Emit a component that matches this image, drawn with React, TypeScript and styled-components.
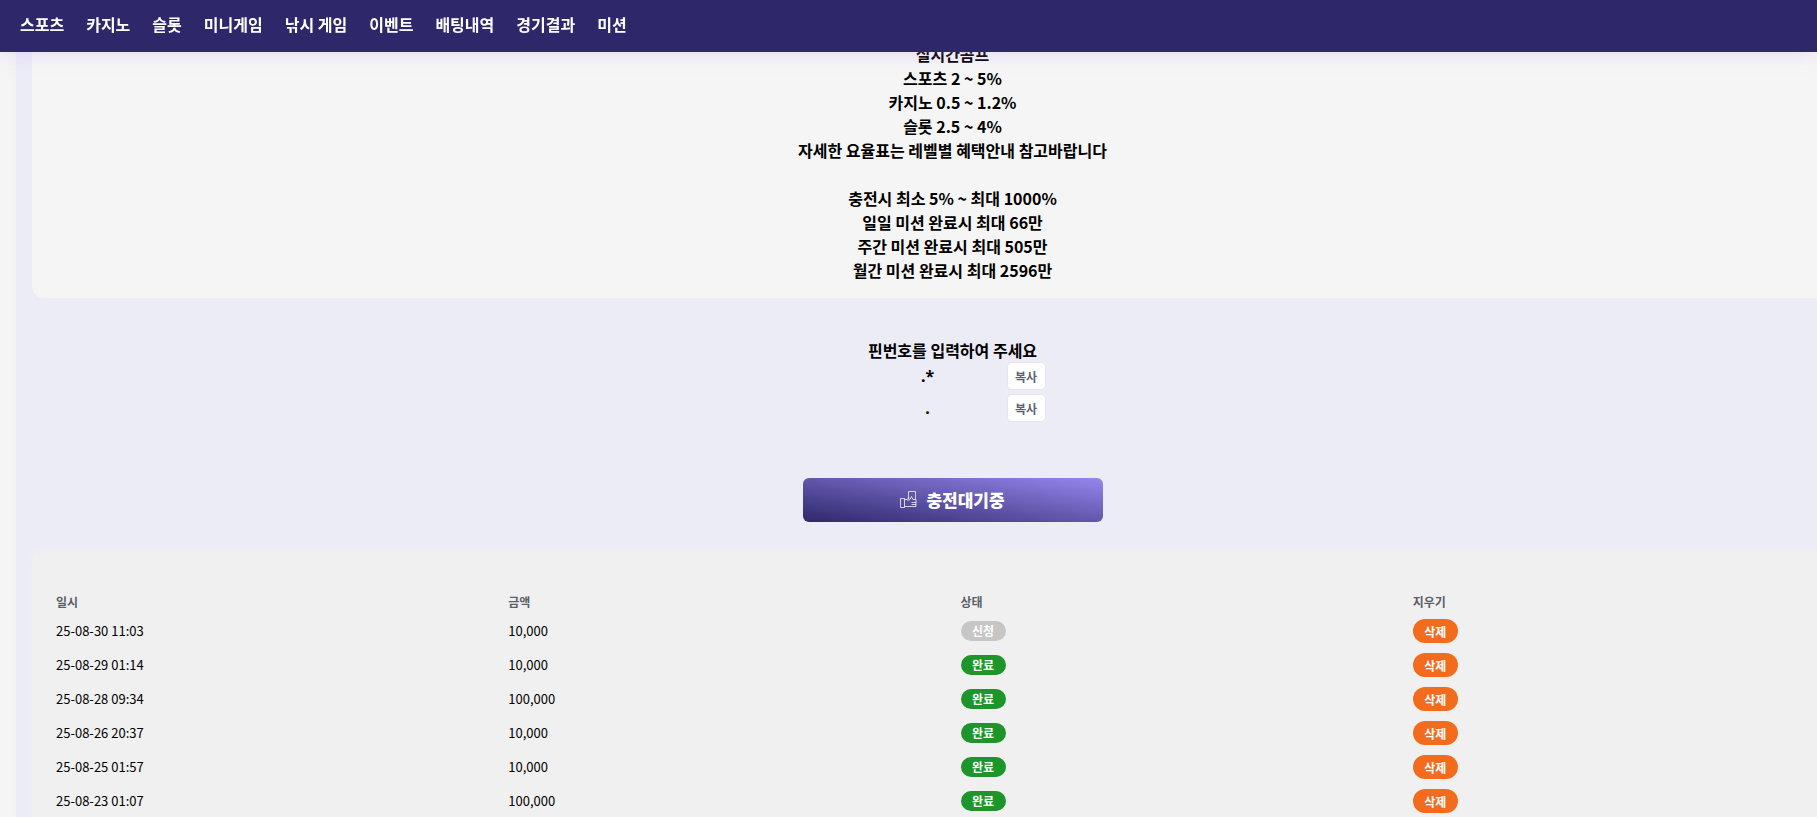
import React from "react";
import styled, { createGlobalStyle } from "styled-components";

const GlobalStyle = createGlobalStyle`
  *, *::before, *::after { box-sizing: border-box; }
  body {
    margin: 0;
    background: #f5f5f5;
    color: #000;
    font-family: "Noto Sans CJK KR", "Noto Sans", sans-serif;
    font-size: 16px;
    line-height: 24px;
  }
`;

const Page = styled.div`
  min-height: 100vh;
  overflow-x: hidden;
`;

const TopBar = styled.header`
  position: fixed;
  top: 0;
  left: 0;
  right: 0;
  z-index: 10;
  height: 52px;
  background: #2e286a;
  box-shadow: 0 0 20px rgba(200, 160, 255, 0.35);
`;

const Nav = styled.nav`
  display: flex;
  align-items: center;
  gap: 22px;
  height: 48px;
  padding: 0 20px;
`;

const NavLink = styled.a`
  color: #fff;
  font-size: 16px;
  font-weight: 700;
  text-decoration: none;
  white-space: nowrap;
`;

const Content = styled.main`
  width: calc(100% + 56px);
  margin-left: 16px;
  padding: 0 16px;
  background: #ececf6;
  box-shadow: 0 0 10px rgba(0, 0, 0, 0.03);
`;

const Notice = styled.section`
  padding: 42px 16px 16px;
  border-radius: 0 0 12px 12px;
  background: #f5f5f5;
  font-weight: 700;
  text-align: center;
`;

const NoticeLine = styled.p`
  min-height: 24px;
  margin: 0;
`;

const PinSection = styled.section`
  display: flex;
  flex-direction: column;
  align-items: center;
  padding: 40px 0 28px;
`;

const PinTitle = styled.h2`
  margin: 0;
  font-size: 16px;
  font-weight: 700;
`;

const PinRow = styled.div`
  display: grid;
  grid-template-columns: 158px 50px;
  align-items: center;
  height: 32px;
`;

const PinValue = styled.span`
  padding-bottom: 4px;
  font-family: "Noto Sans", sans-serif;
  font-weight: 700;
  text-align: center;
`;

const CopyButton = styled.button`
  width: 39px;
  height: 28px;
  margin-bottom: 4px;
  padding: 0;
  border: 1px solid #e6e6ec;
  border-radius: 5px;
  background: #fff;
  color: #5f6370;
  font-family: inherit;
  font-size: 12px;
  font-weight: 700;
`;

const ChargeButton = styled.button`
  display: flex;
  align-items: center;
  justify-content: center;
  gap: 9px;
  width: 300px;
  height: 44px;
  margin-top: 52px;
  padding: 0 0 2px;
  border: 0;
  border-radius: 6px;
  background: linear-gradient(to top right, #2e286a, #9686ee);
  color: #fff;
  font-family: inherit;
  font-size: 17px;
  font-weight: 900;
`;

const History = styled.section`
  padding: 40px 16px 16px;
  border-radius: 12px;
  background: #f0f0f0;
  box-shadow: 0 0 6px #f0f0f0;
`;

const Table = styled.table`
  width: 100%;
  border-collapse: collapse;
  table-layout: fixed;
  text-align: left;
`;

const HeadCell = styled.th`
  height: 24px;
  padding: 0 8px;
  color: #5a5f68;
  font-size: 12px;
  font-weight: 700;
`;

const Cell = styled.td`
  height: 34px;
  padding: 0 8px;
  font-size: 13px;
  line-height: 20px;
`;

const Status = styled.span<{ $done: boolean }>`
  display: block;
  width: 45px;
  height: 20px;
  border-radius: 10px;
  background: ${(p) => (p.$done ? "#1d952a" : "#c6c6c6")};
  color: #fff;
  font-size: 12px;
  font-weight: 700;
  line-height: 20px;
  text-align: center;
`;

const DeleteButton = styled.button`
  display: block;
  width: 45px;
  height: 24px;
  padding: 0;
  border: 0;
  border-radius: 12px;
  background: #f36c1d;
  color: #fff;
  font-family: inherit;
  font-size: 12px;
  font-weight: 700;
`;

const menu = ["스포츠", "카지노", "슬롯", "미니게임", "낚시 게임", "이벤트", "배팅내역", "경기결과", "미션"];

const notice = [
  "실시간콤프",
  "스포츠 2 ~ 5%",
  "카지노 0.5 ~ 1.2%",
  "슬롯 2.5 ~ 4%",
  "자세한 요율표는 레벨별 혜택안내 참고바랍니다",
  "",
  "충전시 최소 5% ~ 최대 1000%",
  "일일 미션 완료시 최대 66만",
  "주간 미션 완료시 최대 505만",
  "월간 미션 완료시 최대 2596만",
];

const pins = [".*", "."];

const history = [
  { date: "25-08-30 11:03", amount: "10,000", status: "신청" },
  { date: "25-08-29 01:14", amount: "10,000", status: "완료" },
  { date: "25-08-28 09:34", amount: "100,000", status: "완료" },
  { date: "25-08-26 20:37", amount: "10,000", status: "완료" },
  { date: "25-08-25 01:57", amount: "10,000", status: "완료" },
  { date: "25-08-23 01:07", amount: "100,000", status: "완료" },
];

const PayIcon = () => (
  <svg width="17" height="17" viewBox="0 0 17 17" fill="none" stroke="#fff" strokeOpacity="0.75" aria-hidden="true">
    <path d="M.5 7.500h4v9h-4zM4.500 8.500h2.500l2-2M8.500 8V.5h7v7.500M4.500 15.500h11.500v-7h-3l-1.500-3-2 3.500H7M16 11.500h-4.500M16 13.500h-4.500" />
  </svg>
);

export default function App() {
  return (
    <Page>
      <GlobalStyle />
      <TopBar>
        <Nav>
          {menu.map((item) => (
            <NavLink href="#" key={item}>{item}</NavLink>
          ))}
        </Nav>
      </TopBar>
      <Content>
        <Notice>
          {notice.map((line, i) => (
            <NoticeLine key={i}>{line}</NoticeLine>
          ))}
        </Notice>
        <PinSection>
          <PinTitle>핀번호를 입력하여 주세요</PinTitle>
          {pins.map((pin) => (
            <PinRow key={pin}>
              <PinValue>{pin}</PinValue>
              <CopyButton type="button">복사</CopyButton>
            </PinRow>
          ))}
          <ChargeButton type="button">
            <PayIcon />
            충전대기중
          </ChargeButton>
        </PinSection>
        <History>
          <Table>
            <thead>
              <tr>
                <HeadCell>일시</HeadCell>
                <HeadCell>금액</HeadCell>
                <HeadCell>상태</HeadCell>
                <HeadCell>지우기</HeadCell>
              </tr>
            </thead>
            <tbody>
              {history.map((row) => (
                <tr key={row.date}>
                  <Cell>{row.date}</Cell>
                  <Cell>{row.amount}</Cell>
                  <Cell><Status $done={row.status === "완료"}>{row.status}</Status></Cell>
                  <Cell><DeleteButton type="button">삭제</DeleteButton></Cell>
                </tr>
              ))}
            </tbody>
          </Table>
        </History>
      </Content>
    </Page>
  );
}
